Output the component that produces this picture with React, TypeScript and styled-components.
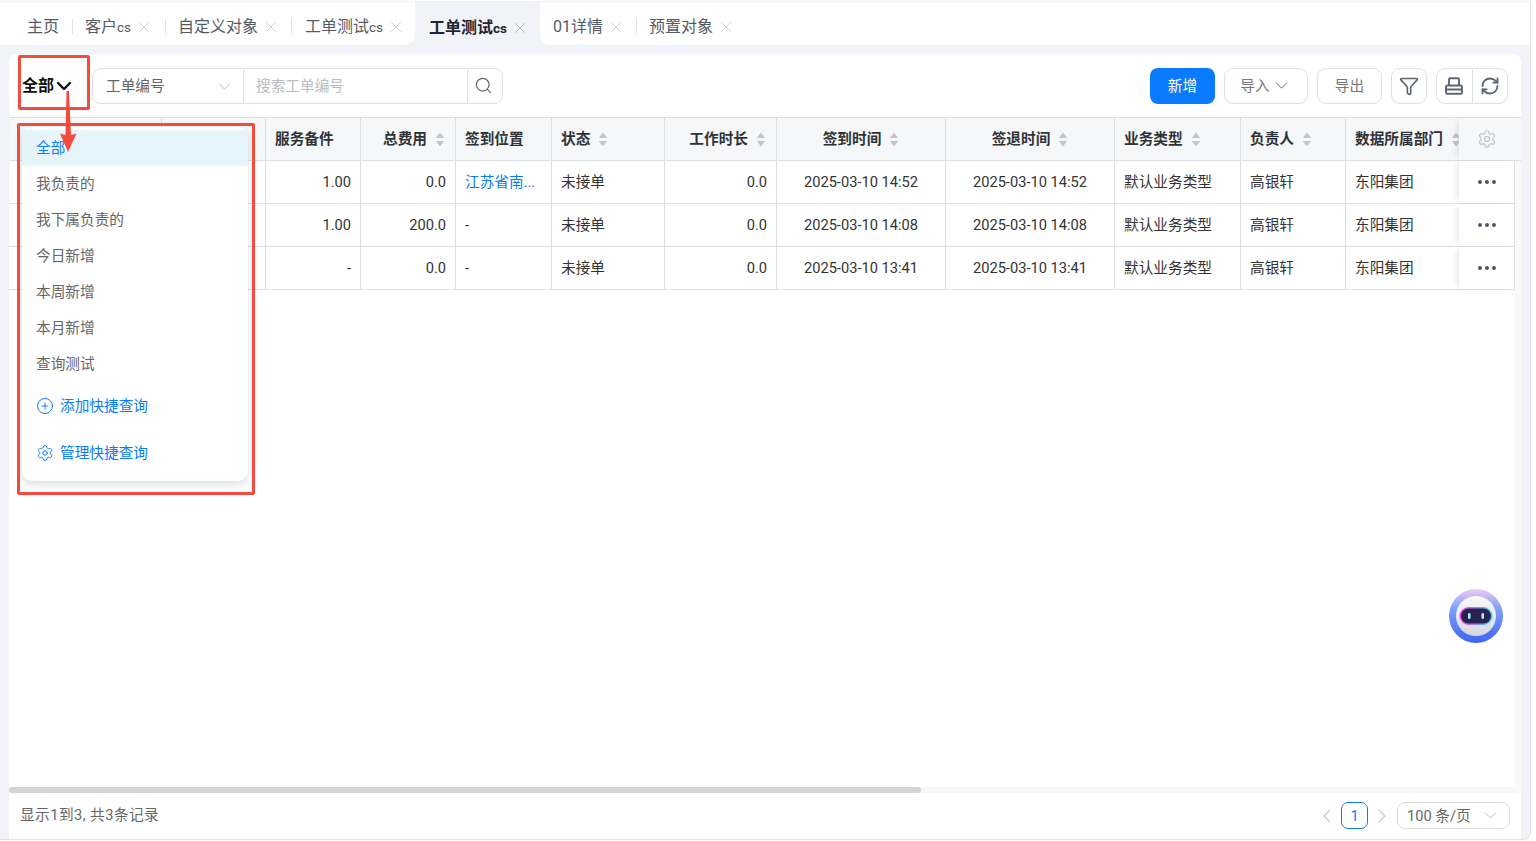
import React from 'react';
import styled, { createGlobalStyle } from 'styled-components';
import { ChevronDown, X, Search, Funnel, RefreshCw, Settings, Ellipsis, CirclePlus, ChevronLeft, ChevronRight } from 'lucide-react';

const Global = createGlobalStyle`
  html, body { margin: 0; padding: 0; background: #fff; }
  body { font-family: Roboto, "Noto Sans CJK SC", sans-serif; color: #333; overflow: hidden; line-height: 20px; }
  * { box-sizing: border-box; }
`;

const Shell = styled.div`
  position: relative; width: 1531px; height: 839px; margin-top: 1px; background: #f1f3f9;
  border-right: 1px solid #e3e4e8; border-bottom: 1px solid #e3e4e8; border-bottom-right-radius: 8px;
  display: flex; flex-direction: column; overflow: hidden; border-top: 1px solid #f1f1f3;
`;
const TabBar = styled.div`height: 43px; display: flex; flex: none;`;
const TabGroup = styled.div<{ $side: 'left' | 'right' }>`
  display: flex; align-items: center; background: #fff; padding-top: 6px;
  ${p => p.$side === 'left'
    ? 'width: 415px; padding-left: 27px; border-bottom-right-radius: 10px;'
    : 'flex: 1; padding-left: 13px; border-bottom-left-radius: 10px;'}
`;
const ActiveTab = styled.div`
  width: 125px; margin-top: 8px; padding: 0 0 0 14px; display: flex; align-items: center; gap: 4px; white-space: nowrap;
  font-size: 16px; font-weight: 700; color: #1f2430; border-radius: 10px 10px 0 0; background: #f1f3f9;
  svg { color: #aab0b8; flex: none; }
`;
const Tab = styled.div<{ $w: number; $divider?: boolean }>`
  width: ${p => p.$w}px; height: 20px; display: flex; align-items: center; gap: 4px; font-size: 16px; color: #555b66; white-space: nowrap; flex: none;
  svg { color: #c4c7cc; flex: none; }
  position: relative;
  ${p => p.$divider ? `&::after { content: ""; position: absolute; right: 0; top: 2px; height: 16px; width: 1px; background: #dfe1e5; }` : ''}
`;
const Latin = styled.span`font-size: 13.5px;`;
const Card = styled.div`
  flex: 1; margin: 9px 9px 0; background: #fff; border-radius: 8px 8px 0 0; display: flex; flex-direction: column; min-height: 0;
`;
const Toolbar = styled.div`height: 63px; flex: none; display: flex; align-items: flex-start; padding: 14px 13px 0 13px;`;
const ViewSelect = styled.div`
  width: 70px; height: 36px; display: flex; align-items: center; font-size: 16px; font-weight: 700; color: #111;
  svg { color: #111; margin-left: -2px; flex: none; }
`;
const SearchGroup = styled.div`
  width: 411px; height: 36px; border: 1px solid #dcdfe4; border-radius: 9px; display: flex; font-size: 14.67px;
`;
const FieldSelect = styled.div`
  width: 151px; border-right: 1px solid #dcdfe4; display: flex; align-items: center; justify-content: space-between;
  padding: 0 8px 0 13px; color: #666; svg { color: #b5b8bd; }
`;
const SearchInput = styled.div`flex: 1; display: flex; align-items: center; padding-left: 12px; color: #b9bcc2;`;
const SearchBtn = styled.div`
  width: 35px; border-left: 1px solid #dcdfe4; display: flex; align-items: center; justify-content: center; padding: 0 3px 2px 0; svg { color: #666; }
`;
const Spacer = styled.div`flex: 1;`;
const Primary = styled.div`
  width: 65px; height: 36px; border-radius: 8px; background: #0a7bff; color: #fff; font-size: 14.67px;
  display: flex; align-items: center; justify-content: center; margin-right: 9px;
`;
const Btn = styled.div<{ $w: number; $gap?: number }>`
  width: ${p => p.$w}px; height: 36px; border: 1px solid #dcdfe4; border-radius: 9px; color: #777; font-size: 14.67px;
  display: flex; align-items: center; justify-content: center; gap: ${p => p.$gap ?? 0}px; margin-right: 9px; padding-bottom: 1px; svg { color: #5c6674; }
`;
const BtnGroup = styled.div`
  width: 72px; height: 36px; border: 1px solid #dcdfe4; border-radius: 9px; display: flex;
  > div { flex: 1; display: flex; align-items: center; justify-content: center; color: #5c6674; }
  > div + div { border-left: 1px solid #dcdfe4; }
`;
const TableArea = styled.div`flex: 1; min-height: 0; display: flex; flex-direction: column; position: relative;`;
const COLS = '153px 104px 95px 95px 96px 113px 112px 169px 169px 126px 105px 114px';
const HeadRow = styled.div`
  display: grid; grid-template-columns: ${COLS} 1fr; height: 44px; flex: none; background: #f6f7f9;
  border-top: 1px solid #dcdee3; border-bottom: 1px solid #dcdee3;
`;
const Row = styled.div`
  display: grid; grid-template-columns: ${COLS} 55px; height: 43px; flex: none; width: 1506px;
  border-bottom: 1px solid #dcdee3;
`;
const HCell = styled.div<{ $align?: string }>`
  display: flex; align-items: center; gap: 8px; font-size: 14.67px; font-weight: 700; color: #2f3338;
  padding: 0 ${p => p.$align === 'right' ? 10 : 9}px 0 9px;
  white-space: nowrap; overflow: hidden; border-right: 1px solid #dcdee3;
  justify-content: ${p => p.$align === 'right' ? 'flex-end' : p.$align === 'center' ? 'center' : 'flex-start'};
`;
const Cell = styled.div<{ $align?: string; $link?: boolean }>`
  display: flex; align-items: center; padding: 0 9px; font-size: 14.67px; color: ${p => p.$link ? '#0a7bff' : '#333'};
  white-space: nowrap; overflow: hidden; border-right: 1px solid #dcdee3;
  justify-content: ${p => p.$align === 'right' ? 'flex-end' : p.$align === 'center' ? 'center' : 'flex-start'};
`;
const FixedHead = styled.div`
  display: flex; align-items: center; justify-content: center; padding-right: 6px; color: #b7babf;
  position: relative; background: #f6f7f9; box-shadow: -5px 0 6px -3px rgba(0,0,0,.1); margin-left: -1px;
`;
const FixedCell = styled.div`
  display: flex; align-items: center; justify-content: center; color: #4b5563; background: #fff;
  position: relative; box-shadow: -5px 0 6px -3px rgba(0,0,0,.1); border-right: 1px solid #dcdee3; margin-left: -1px;
`;
const Filler = styled.div`flex: 1; margin-right: 6px;`;
const VTrack = styled.div`position: absolute; right: 0; top: 44px; bottom: 0; width: 6px; background: #f9f9fa;`;
const HTrack = styled.div`height: 6px; flex: none; background: #f7f7f8; margin-right: 6px;`;
const HThumb = styled.div`width: 912px; height: 6px; background: #d4d4d6; border-radius: 3px;`;
const Footer = styled.div`
  height: 46px; flex: none; display: flex; align-items: center; justify-content: space-between;
  padding: 0 11px 1px 11px; font-size: 14.67px; color: #666;
`;
const Summary = styled.span`letter-spacing: .45px; position: relative; top: -1px;`;
const Pager = styled.div`display: flex; align-items: center; color: #c1c4c8; svg { flex: none; }`;
const PageNum = styled.div`
  width: 27px; height: 27px; border: 1px solid #0a7bff; border-radius: 7px; color: #0a7bff; font-size: 14.67px;
  display: flex; align-items: center; justify-content: center; margin: 0 2px;
`;
const PageSize = styled.div`
  width: 113px; height: 27px; border: 1px solid #d9dbdf; border-radius: 8px; margin-left: 3px; padding: 0 8px 0 9px;
  display: flex; align-items: center; justify-content: space-between; color: #666; font-size: 14.67px; svg { color: #bbb; }
`;
const Menu = styled.div`
  position: absolute; left: 22px; top: 125px; width: 226px; height: 354px; padding-top: 3px; background: #fff; border-radius: 10px;
  box-shadow: 0 3px 10px rgba(0,0,0,.14); font-size: 14.67px; color: #666;
  &::before { content: ""; position: absolute; left: 18px; top: -7px; width: 14px; height: 14px; background: #fff; transform: rotate(45deg); box-shadow: -1px -1px 2px rgba(0,0,0,.04); z-index: -1; }
`;
const MenuItem = styled.div<{ $active?: boolean }>`
  height: 36px; display: flex; align-items: center; padding-left: 14px;
  ${p => p.$active ? 'background: #e6f4fc; color: #0a7bff;' : ''}
`;
const MenuAction = styled.div<{ $mt: number }>`
  display: flex; align-items: center; gap: 6px; height: 24px; padding-left: 14px; margin-top: ${p => p.$mt}px; color: #0a7bff;
`;
const RedBox = styled.div<{ $x: number; $y: number; $w: number; $h: number }>`
  position: absolute; left: ${p => p.$x}px; top: ${p => p.$y}px; width: ${p => p.$w}px; height: ${p => p.$h}px;
  border: 3px solid #f44b3f; border-radius: 2px;
`;
const Overlay = styled.svg`position: absolute; left: 0; top: 0; pointer-events: none;`;
const RobotWrap = styled.div`position: absolute; left: 1448px; top: 586px; width: 56px; height: 56px;`;

const Sort = () => (
  <svg width="10" height="15" viewBox="0 0 10 15" style={{ flex: 'none' }}>
    <path d="M5 0.5 9.2 6H.8z" fill="#c3c5c9" />
    <path d="M5 14.5 .8 9h8.4z" fill="#c3c5c9" />
  </svg>
);

const PrintIcon = () => (
  <svg width="20" height="20" viewBox="0 0 20 20" fill="none" stroke="#5c6674" strokeWidth="1.9" strokeLinejoin="round">
    <path d="M5 9.500V3.500c0-.7.5-1.200 1.200-1.200h7.600c.7 0 1.200.5 1.200 1.200v6" />
    <path d="M3.300 9.500h13.400c.7 0 1.300.6 1.300 1.300v5.600c0 .7-.6 1.300-1.300 1.300H3.300c-.7 0-1.300-.6-1.300-1.300v-5.600c0-.7.6-1.300 1.300-1.300z" />
    <path d="M2 13.500h16" />
  </svg>
);

const Robot = () => (
  <svg width="56" height="56" viewBox="0 0 56 56">
    <defs>
      <linearGradient id="rb" x1="0" y1="0" x2="0" y2="1">
        <stop offset="0" stopColor="#f0c8f6" />
        <stop offset=".35" stopColor="#7ea2f5" />
        <stop offset="1" stopColor="#3f63f5" />
      </linearGradient>
      <linearGradient id="rh" x1="0" y1="0" x2="0" y2="1">
        <stop offset="0" stopColor="#fafafa" />
        <stop offset="1" stopColor="#d5d6e2" />
      </linearGradient>
      <linearGradient id="rv" x1="0" y1="0" x2="1" y2="0">
        <stop offset="0" stopColor="#f23fe0" />
        <stop offset="1" stopColor="#35d6f2" />
      </linearGradient>
    </defs>
    <circle cx="28" cy="28" r="27" fill="url(#rb)" />
    <circle cx="28" cy="28" r="20" fill="url(#rh)" />
    <rect x="11.500" y="19" width="33" height="18" rx="9" fill="url(#rv)" />
    <rect x="13" y="20.500" width="30" height="15" rx="7.500" fill="#2a2350" />
    <rect x="20" y="25" width="2.500" height="6" rx="1.250" fill="#a8f3fa" />
    <rect x="33.500" y="25" width="2.500" height="6" rx="1.250" fill="#a8f3fa" />
  </svg>
);

type Col = { t: string; a?: string; s?: boolean };
const head: Col[] = [
  { t: '' }, { t: '' }, { t: '服务备件' }, { t: '总费用', a: 'right', s: true }, { t: '签到位置' },
  { t: '状态', s: true }, { t: '工作时长', a: 'right', s: true }, { t: '签到时间', a: 'center', s: true },
  { t: '签退时间', a: 'center', s: true }, { t: '业务类型', s: true }, { t: '负责人', s: true }, { t: '数据所属部门', s: true },
];
const rows = [
  ['1.00', '0.0', '江苏省南...', '2025-03-10 14:52'],
  ['1.00', '200.0', '-', '2025-03-10 14:08'],
  ['-', '0.0', '-', '2025-03-10 13:41'],
];

export default function App() {
  return (
    <>
      <Global />
      <Shell>
        <TabBar>
          <TabGroup $side="left">
            <Tab $w={46} $divider>主页</Tab>
            <Tab $w={12} />
            <Tab $w={81} $divider><span>客户<Latin>cs</Latin></span><X size={18} strokeWidth={1.1} /></Tab>
            <Tab $w={12} />
            <Tab $w={114} $divider>自定义对象<X size={18} strokeWidth={1.1} /></Tab>
            <Tab $w={13} />
            <Tab $w={96}><span>工单测试<Latin>cs</Latin></span><X size={18} strokeWidth={1.1} /></Tab>
          </TabGroup>
          <ActiveTab><span>工单测试<Latin>cs</Latin></span><X size={18} strokeWidth={1.1} /></ActiveTab>
          <TabGroup $side="right">
            <Tab $w={84} $divider>01详情<X size={18} strokeWidth={1.1} /></Tab>
            <Tab $w={12} />
            <Tab $w={100}>预置对象<X size={18} strokeWidth={1.1} /></Tab>
          </TabGroup>
        </TabBar>
        <Card>
          <Toolbar>
            <ViewSelect>全部<ChevronDown size={24} strokeWidth={2.4} /></ViewSelect>
            <SearchGroup>
              <FieldSelect>工单编号<ChevronDown size={21} strokeWidth={1.1} /></FieldSelect>
              <SearchInput>搜索工单编号</SearchInput>
              <SearchBtn><Search size={19} strokeWidth={1.5} /></SearchBtn>
            </SearchGroup>
            <Spacer />
            <Primary>新增</Primary>
            <Btn $w={84} $gap={1}>导入<ChevronDown size={21} strokeWidth={1.1} /></Btn>
            <Btn $w={65}>导出</Btn>
            <Btn $w={36}><Funnel size={20} strokeWidth={2} /></Btn>
            <BtnGroup>
              <div><PrintIcon /></div>
              <div><RefreshCw size={20} strokeWidth={2.2} /></div>
            </BtnGroup>
          </Toolbar>
          <TableArea>
            <HeadRow>
              {head.map((c, i) => (
                <HCell key={i} $align={c.a}>{c.t}{c.s && <Sort />}</HCell>
              ))}
              <FixedHead><Settings size={20} strokeWidth={1.3} /></FixedHead>
            </HeadRow>
            {rows.map((r, i) => (
              <Row key={i}>
                <Cell /><Cell />
                <Cell $align="right">{r[0]}</Cell>
                <Cell $align="right">{r[1]}</Cell>
                <Cell $link={r[2] !== '-'}>{r[2]}</Cell>
                <Cell>未接单</Cell>
                <Cell $align="right">0.0</Cell>
                <Cell $align="center">{r[3]}</Cell>
                <Cell $align="center">{r[3]}</Cell>
                <Cell>默认业务类型</Cell>
                <Cell>高银轩</Cell>
                <Cell>东阳集团</Cell>
                <FixedCell><Ellipsis size={24} strokeWidth={1.9} /></FixedCell>
              </Row>
            ))}
            <Filler />
            <VTrack />
            <HTrack><HThumb /></HTrack>
          </TableArea>
          <Footer>
            <Summary>显示1到3, 共3条记录</Summary>
            <Pager>
              <ChevronLeft size={24} strokeWidth={1.1} />
              <PageNum>1</PageNum>
              <ChevronRight size={24} strokeWidth={1.1} />
              <PageSize>100 条/页<ChevronDown size={21} strokeWidth={1.1} /></PageSize>
            </Pager>
          </Footer>
        </Card>
        <Menu>
          <MenuItem $active>全部</MenuItem>
          {['我负责的', '我下属负责的', '今日新增', '本周新增', '本月新增', '查询测试'].map(t => (
            <MenuItem key={t}>{t}</MenuItem>
          ))}
          <MenuAction $mt={12}><CirclePlus size={18} strokeWidth={1.3} />添加快捷查询</MenuAction>
          <MenuAction $mt={23}><Settings size={18} strokeWidth={1.3} />管理快捷查询</MenuAction>
        </Menu>
        <RedBox $x={18} $y={53} $w={72} $h={55} />
        <RedBox $x={17} $y={121} $w={238} $h={372} />
        <Overlay width="120" height="170">
          <path d="M66.500 89h2.500l2 44 5.500-1.500-8.500 18.500-8-18.500 5.500 1.500z" fill="#f44b3f" />
        </Overlay>
        <RobotWrap><Robot /></RobotWrap>
      </Shell>
    </>
  );
}
